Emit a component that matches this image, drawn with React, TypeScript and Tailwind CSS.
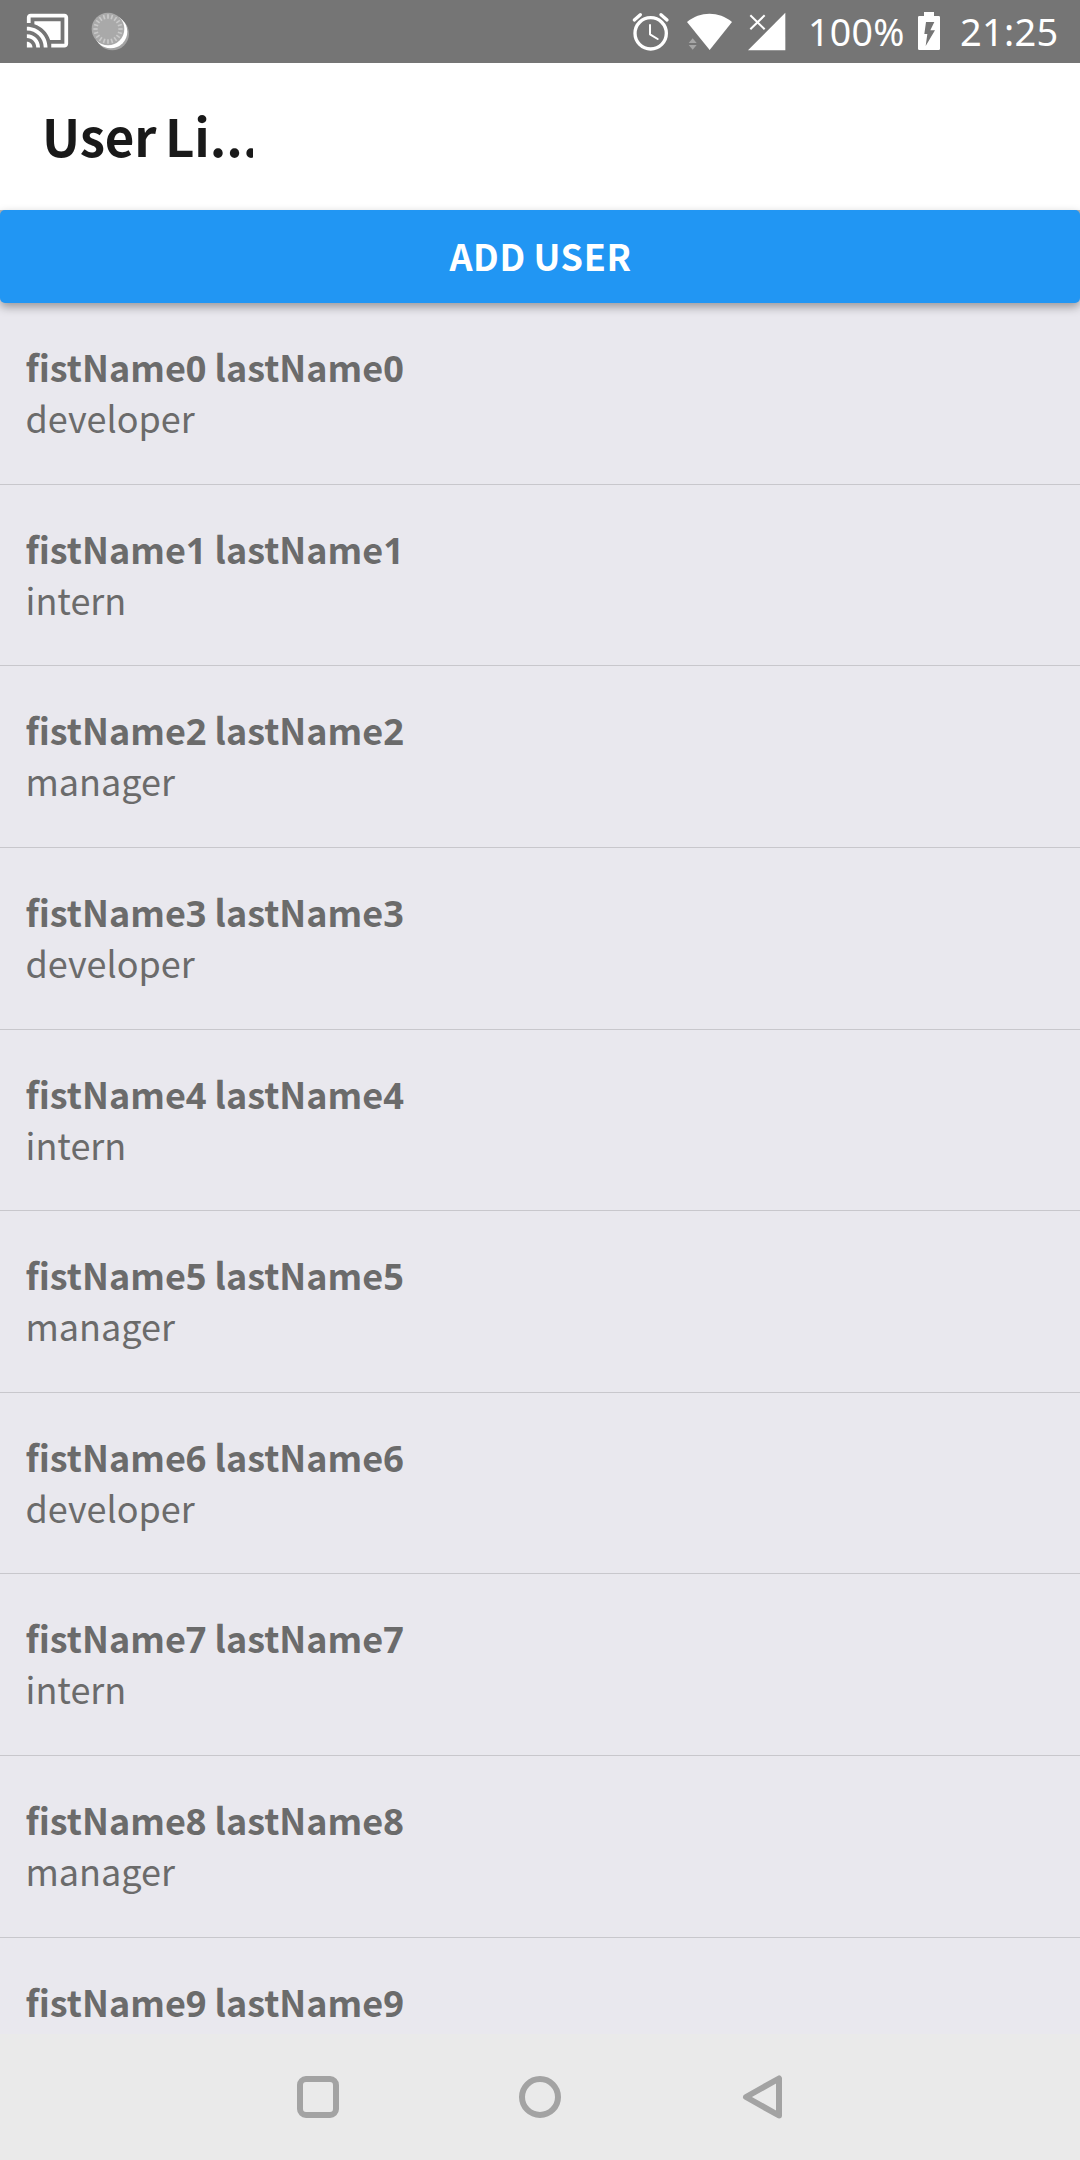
import React from 'react';

const roles = ['developer', 'intern', 'manager'];
const users = Array.from({ length: 10 }, (_, id) => ({ id, role: roles[id % 3] }));
const spokes = Array.from({ length: 20 }, (_, i) => i * 18);

function Digit({ value }: { value: number }) {
  return <span className="font-['Noto_Sans',sans-serif]">{value}</span>;
}

function StatusBar() {
  return (
    <header className="flex h-[63px] shrink-0 items-center bg-[#757575] text-white">
      <svg className="ml-[25px] h-[45px] w-[45px] -translate-y-px" viewBox="0 0 24 24" fill="currentColor">
        <path d="M1 18v3h3c0-1.66-1.34-3-3-3zm0-4v2c2.76 0 5 2.24 5 5h2c0-3.87-3.13-7-7-7zm18-7H5v1.63c3.96 1.28 7.09 4.41 8.37 8.37H19V7zM1 10v2c4.97 0 9 4.03 9 9h2c0-6.08-4.93-11-11-11zm20-7H3c-1.1 0-2 .9-2 2v3h2V5h18v14h-7v2h7c1.1 0 2-.9 2-2V5c0-1.1-.9-2-2-2z" />
      </svg>
      <svg className="ml-5 h-[63px] w-[40px]" viewBox="270 0 120 189">
        <circle cx="337" cy="101" r="50" fill="#a3a3a3" />
        <circle cx="332" cy="95" r="50" fill="#fff" />
        <circle cx="324" cy="87" r="49" fill="#a9a9a9" />
        {spokes.map((deg) => (
          <path key={deg} d="M324 43v13" stroke="#c9c9c9" strokeWidth="5" transform={`rotate(${deg} 324 87)`} />
        ))}
      </svg>
      <div className="flex-1" />
      <svg className="h-[63px] w-[40px]" viewBox="60 0 120 189" fill="none" stroke="currentColor" strokeLinecap="round">
        <circle cx="122" cy="100" r="47" strokeWidth="10" />
        <path d="M120 75v28l23 14" strokeWidth="6" strokeLinejoin="round" />
        <path d="M73 60l18-16M153 44l18 16" strokeWidth="10" />
      </svg>
      <svg className="ml-[16px] h-[63px] w-[50px]" viewBox="228 0 150 189">
        <path d="M299 150L231 66C270 33 327 33 366 66z" fill="currentColor" />
        <path d="M236 129l12-14 12 14zM236 135h24l-12 14z" fill="#a6a6a6" />
      </svg>
      <svg className="ml-[10px] h-[63px] w-[40px]" viewBox="408 0 120 189">
        <path d="M414 151H526V38z" fill="currentColor" />
        <path d="M421 46l43 42M464 46l-43 42" stroke="currentColor" strokeWidth="6" />
      </svg>
      <span className="ml-[22px] w-[98px] whitespace-nowrap font-['Noto_Sans',sans-serif] text-[37.5px] leading-[63px] tracking-[0.3px]">
        100%
      </span>
      <svg className="ml-[12px] h-[63px] w-[22px]" viewBox="384 0 66 189">
        <path
          fill="currentColor"
          fillRule="evenodd"
          d="M402 36h30v12h14q4 0 4 4v94q0 4-4 4H388q-4 0-4-4V52q0-4 4-4h14zM408 66L403 102H412L407 138L435 91H421L433 66z"
        />
      </svg>
      <span className="ml-[20px] mr-[21px] w-[99px] whitespace-nowrap font-['Noto_Sans',sans-serif] text-[38px] leading-[63px] tracking-[0.3px]">
        21:25
      </span>
    </header>
  );
}

function NavigationBar() {
  return (
    <nav className="flex h-[126px] shrink-0 items-center justify-center bg-[#eaeaea] text-[#a3a3a3]">
      <div className="flex w-[222px] justify-center">
        <div className="h-[42px] w-[42px] rounded-[9px] border-6 border-[#a3a3a3]" />
      </div>
      <div className="flex w-[222px] justify-center">
        <div className="h-[42px] w-[42px] rounded-full border-6 border-[#a3a3a3]" />
      </div>
      <div className="flex w-[222px] justify-center">
        <svg className="h-12 w-12" viewBox="0 0 48 48" fill="none" stroke="currentColor" strokeWidth="6" strokeLinejoin="round">
          <path d="M8 24L41 5.5V42.5z" />
        </svg>
      </div>
    </nav>
  );
}

export default function App() {
  return (
    <div className="flex h-[2160px] w-[1080px] flex-col overflow-hidden bg-[#e9e8ee] font-['Noto_Sans_CJK_SC',sans-serif]">
      <StatusBar />
      <div className="flex h-[147px] shrink-0 items-center bg-white pb-[3px] pl-[42px]">
        <h1 className="w-[211px] overflow-hidden whitespace-nowrap text-[51px] font-bold leading-[76px] tracking-[-0.1px] text-[#191919] [word-spacing:-3px]">
          User Li...
        </h1>
      </div>
      <div className="z-10 shrink-0 bg-gradient-to-b from-[#b5b5b5] from-10% to-[#e9e8ee] to-20%">
        <button className="block h-[93px] w-full rounded-[5px] bg-[#2196f3] pb-[3px] pl-px text-center text-[36px] font-bold leading-[90px] tracking-[0.6px] text-white shadow-[0_4px_10px_rgba(0,0,0,0.35)] [word-spacing:-1px]">
          ADD USER
        </button>
      </div>
      <ul className="min-h-0 flex-1 overflow-hidden">
        {users.map(({ id, role }) => (
          <li key={id} className="h-[181.64px] border-b border-[#c8c7cc] pl-[25.5px] pt-[38px] text-[36px] leading-[51.5px] text-[#6b6b6b]">
            <p className="h-[51px] font-bold">
              fistName<Digit value={id} /> lastName<Digit value={id} />
            </p>
            <p>{role}</p>
          </li>
        ))}
      </ul>
      <NavigationBar />
    </div>
  );
}
